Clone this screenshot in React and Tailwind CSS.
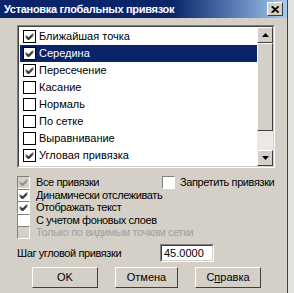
import React from "react";

const font = { fontFamily: '"Liberation Sans", Arial, sans-serif' };

function Check({ checked, disabled, flat }) {
  return (
    <div
      className={
        "w-[13px] h-[13px] shrink-0 flex items-center justify-center " +
        (flat
          ? "border-[1.5px] border-black bg-white"
          : "border-t border-l border-[#808080] border-b border-r border-b-white border-r-white " +
            (disabled ? "bg-[#d4d0c8]" : "bg-white"))
      }
    >
      {checked && (
        <svg width="9" height="9" viewBox="0 0 9 9">
          <path
            d="M1 3.5 L3.5 6 L8 1.5 M1 4.5 L3.5 7 L8 2.5 M1 5.5 L3.5 8 L8 3.5"
            stroke={disabled ? "#808080" : "#000"}
            strokeWidth="1"
            fill="none"
          />
        </svg>
      )}
    </div>
  );
}

const items = [
  ["Ближайшая точка", true],
  ["Середина", true],
  ["Пересечение", true],
  ["Касание", false],
  ["Нормаль", false],
  ["По сетке", false],
  ["Выравнивание", false],
  ["Угловая привязка", true],
];

function Arrow({ up }) {
  return (
    <div className="w-[16px] h-[16px] shrink-0 bg-[#d4d0c8] border border-t-white border-l-white border-r-[#404040] border-b-[#404040] flex items-center justify-center">
      <svg width="7" height="4" viewBox="0 0 7 4">
        <path d={up ? "M3.5 0 L7 4 L0 4 Z" : "M0 0 L7 0 L3.5 4 Z"} fill="#000" />
      </svg>
    </div>
  );
}

function Btn({ children, w }) {
  return (
    <div
      className={
        w +
        " h-[21px] bg-[#d4d0c8] border border-t-white border-l-white border-r-[#404040] border-b-[#404040] flex items-center justify-center text-[11px] text-black"
      }
    >
      {children}
    </div>
  );
}

export default function App() {
  return (
    <div className="w-[294px] h-[293px] bg-[#e4e2de] overflow-hidden" style={font}>
      <div className="w-[288px] h-[293px] bg-[#d4d0c8] border-r border-r-[#404040] flex flex-col text-[11px] text-black">
        <div className="h-[18px] shrink-0 bg-gradient-to-r from-[#0a246a] via-[#0a246a] via-60% to-[#a6caf0] flex items-center justify-between pl-[4px] pr-[4px]">
          <span className="text-white font-bold text-[11px] leading-none tracking-[-0.3px]">
            Установка глобальных привязок
          </span>
          <div className="w-[16px] h-[14px] bg-[#d4d0c8] border border-t-white border-l-white border-r-[#404040] border-b-[#404040] flex items-center justify-center">
            <svg width="8" height="7" viewBox="0 0 8 7">
              <path d="M0.5 0.5 L7 6.5 M7 0.5 L0.5 6.5 M1.5 0.5 L8 6.5 M8 0.5 L1.5 6.5" stroke="#000" strokeWidth="1.2" />
            </svg>
          </div>
        </div>
        <div className="ml-[17px] mt-[7px] w-[258px] h-[143px] shrink-0 border border-t-[#808080] border-l-[#808080] border-r-white border-b-white">
          <div className="w-full h-full border border-t-[#404040] border-l-[#404040] border-r-[#d4d0c8] border-b-[#d4d0c8] bg-white flex">
            <div className="flex-1 flex flex-col pt-[1px] pl-[1px]">
              {items.map(([label, c], i) => (
                <div
                  key={label}
                  className={
                    "h-[17px] flex items-center gap-[3px] pl-[3px] " +
                    (i === 1 ? "bg-[#0a246a] text-white" : "")
                  }
                >
                  <Check checked={c} flat />
                  <span>{label}</span>
                </div>
              ))}
            </div>
            <div className="w-[16px] flex flex-col bg-[#ece9e2]">
              <Arrow up />
              <div className="h-[88px] bg-[#d4d0c8] border border-t-white border-l-white border-r-[#404040] border-b-[#404040]"></div>
              <div className="flex-1"></div>
              <Arrow />
            </div>
          </div>
        </div>
        <div className="mt-[8px] ml-[17px] flex flex-col tracking-[-0.4px]">
          <div className="h-[13px] flex items-center">
            <div className="w-[145px] flex items-center gap-[6px]">
              <Check checked disabled />
              <span>Все привязки</span>
            </div>
            <div className="flex items-center gap-[5px]">
              <Check />
              <span>Запретить привязки</span>
            </div>
          </div>
          <div className="h-[12px] flex items-center gap-[6px]">
            <Check checked />
            <span>Динамически отслеживать</span>
          </div>
          <div className="h-[13px] flex items-center gap-[6px]">
            <Check checked />
            <span>Отображать текст</span>
          </div>
          <div className="h-[12px] flex items-center gap-[6px]">
            <Check />
            <span>С учетом фоновых слоев</span>
          </div>
          <div className="h-[13px] flex items-center gap-[6px] text-[#a0a0a0]">
            <Check disabled />
            <span>Только по видимым точкам сетки</span>
          </div>
        </div>
        <div className="mt-[5px] ml-[17px] flex items-center tracking-[-0.4px]">
          <span className="w-[143px]">Шаг угловой привязки</span>
          <div className="w-[54px] h-[18px] border border-t-[#808080] border-l-[#808080] border-r-white border-b-white">
            <div className="w-full h-full bg-white border border-t-[#404040] border-l-[#404040] border-r-[#d4d0c8] border-b-[#d4d0c8] flex items-center pl-[2px] tracking-normal">
              45.0000
            </div>
          </div>
        </div>
        <div className="mt-[5px] ml-[32px] flex gap-[17px]">
          <Btn w="w-[66px]">OK</Btn>
          <Btn w="w-[63px]">Отмена</Btn>
          <Btn w="w-[66px]">
            <span>
              С<span className="underline">п</span>равка
            </span>
          </Btn>
        </div>
      </div>
    </div>
  );
}
